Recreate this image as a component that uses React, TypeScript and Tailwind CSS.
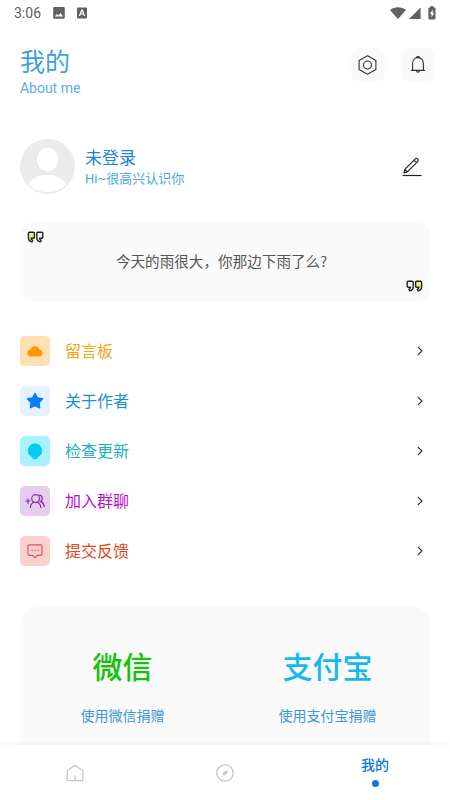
import type { ReactNode } from "react";

type MenuItem = {
  key: string;
  label: string;
  color: string;
  tile: string;
  icon: ReactNode;
};

const menu: MenuItem[] = [
  {
    key: "board",
    label: "留言板",
    color: "text-[#f2a516]",
    tile: "bg-[#ffe0b2]",
    icon: (
      <svg viewBox="0 0 30 30" className="size-[30px]" fill="#ff9800">
        <path d="M9.9 20.6a3.7 3.7 0 0 1-.7-6.7q.6-.3 1.4-.3a4.6 4.6 0 0 1 8.8 0q.8 0 1.4.3a3.7 3.7 0 0 1-.7 6.7z" />
      </svg>
    ),
  },
  {
    key: "author",
    label: "关于作者",
    color: "text-[#1a8fcf]",
    tile: "bg-[#e5f2ff]",
    icon: (
      <svg viewBox="0 0 30 30" className="size-[30px]" fill="#0a7cff" stroke="#0a7cff" strokeWidth="1.8" strokeLinejoin="round">
        <path d="m15 7.8 2.3 4.3 4.9.9-3.4 3.6.6 4.9-4.4-2-4.4 2 .6-4.9-3.4-3.6 4.9-.9z" />
      </svg>
    ),
  },
  {
    key: "update",
    label: "检查更新",
    color: "text-[#22aebf]",
    tile: "bg-[#aaf0ff]",
    icon: (
      <svg viewBox="0 0 30 30" className="size-[30px]" fill="#00cdf5">
        <path d="M15 7.6a7 7 0 0 1 4.4 12.5c-.9.7-1.4 1-1.6 1.6h-5.6c-.2-.6-.7-.9-1.6-1.6A7 7 0 0 1 15 7.6z" />
        <path d="M12.6 22h4.8v.8h-1.2v.4h-2.4v-.4h-1.2z" />
      </svg>
    ),
  },
  {
    key: "group",
    label: "加入群聊",
    color: "text-[#b414d2]",
    tile: "bg-[#e6cdee]",
    icon: (
      <svg viewBox="0 0 30 30" className="size-[30px]" fill="none" stroke="#8a2aa5" strokeWidth="1.2" strokeLinecap="round">
        <path d="M5.8 15h4.4M8 12.8v4.4" />
        <circle cx="15.6" cy="12.6" r="3.9" />
        <path d="M10.4 21.4c.3-2.6 1.5-4.4 3.4-5.1M17.4 16.3c1.9.7 3.1 2.5 3.4 5.1" />
        <path d="M18.9 9.2c3.5-.3 4.4 4.4 1.7 6.2 2 .8 3.3 2.5 3.7 5.2" />
      </svg>
    ),
  },
  {
    key: "feedback",
    label: "提交反馈",
    color: "text-[#dc4a1c]",
    tile: "bg-[#fbd0cf]",
    icon: (
      <svg viewBox="0 0 30 30" className="size-[30px]" fill="none" stroke="#d95555" strokeWidth="1.2" strokeLinecap="round" strokeLinejoin="round">
        <path d="M9.4 8.9h11.2q1.4 0 1.4 1.4v7.6q0 1.4-1.4 1.4h-3.2L15 21.7l-2.4-2.4H9.4Q8 19.3 8 17.9v-7.6q0-1.4 1.4-1.4z" />
        <path d="M11.8 14.3h.5M14.8 14.3h.5M17.8 14.3h.5" />
      </svg>
    ),
  },
];

function StatusBar() {
  return (
    <div className="flex h-6 shrink-0 items-center px-3.5 pt-px text-[#616161]">
      <span className="w-[39px] text-[14px] leading-5">3:06</span>
      <svg viewBox="0 0 12 12" className="size-3" fill="currentColor">
        <path fillRule="evenodd" d="M1.4 0h9.2q1.2 0 1.2 1.2v9.4q0 1.2-1.2 1.2H1.4Q.2 11.8.2 10.6V1.2Q.2 0 1.4 0zM1.8 9.4h8.4L7.6 6 5.4 8.5 3.9 6.9z" />
      </svg>
      <svg viewBox="0 0 10 12" className="ml-3 h-3 w-2.5" fill="currentColor">
        <path fillRule="evenodd" d="M1 .6h8q1 0 1 1v8.8q0 1-1 1H1q-1 0-1-1V1.6q0-1 1-1zM4.3 2.6 1.8 9h1.3l.5-1.4h2.8L6.9 9h1.3L5.7 2.6zm.7 1.6.9 2.3H4.1z" />
      </svg>
      <div className="ml-auto flex items-center gap-[3px]">
        <svg viewBox="0 0 16 12" className="h-3 w-4" fill="currentColor">
          <path d="M0 3C4.6-.6 11.4-.6 16 3L8 12z" />
        </svg>
        <svg viewBox="0 0 12 12" className="h-3 w-3" fill="currentColor">
          <path d="M11.6.4V12H0z" />
        </svg>
        <svg viewBox="0 0 8 14" className="ml-1 h-3.5 w-2" fill="currentColor">
          <path fillRule="evenodd" d="M2.4 0h3v1.4h1.3q.8 0 .8.8v10.4q0 .8-.8.8H1.2q-.8 0-.8-.8V2.2q0-.8.8-.8h1.2zM4.7 3.6 1.9 8h1.6v3.4L6.2 7H4.7z" />
        </svg>
      </div>
    </div>
  );
}

// closing mark; the opening one is its mirror image
function QuoteMark() {
  return (
    <svg viewBox="0 0 17 12" className="h-3 w-[17px]" fill="none" stroke="#222" strokeWidth="1.4" strokeLinejoin="round">
      <path d="M2.2 1.2h4q1 0 1 1v4.3q0 3.7-3.5 4.3l-.8-1.5q1.5-.6 1.7-2.1H2.2q-1 0-1-1v-4q0-1 1-1z" />
      <path fill="#f1ee85" d="M10.6 1.2h4q1 0 1 1v4.3q0 3.7-3.5 4.3l-.8-1.5q1.5-.6 1.7-2.1h-2.4q-1 0-1-1v-4q0-1 1-1z" />
    </svg>
  );
}

function Header() {
  return (
    <header className="flex items-start justify-between pl-5 pr-[15px]">
      <div className="mt-[21px]">
        <h1 className="text-[25px] leading-9 text-[#3d9fe0]">我的</h1>
        <p className="-mt-px text-[14px] leading-4 tracking-[-0.02px] text-[#5aaee2]">About me</p>
      </div>
      <div className="mt-6 flex gap-4">
        <button className="flex size-[34px] items-center justify-center rounded-[9px] bg-[#fafafa]">
          <svg viewBox="0 0 20 20" className="size-5" fill="none" stroke="#333" strokeWidth="1.1" strokeLinejoin="round">
            <path d="M9.5.8 17.9 5.4v9.2L9.5 19.2l-8.4-4.6V5.4z" />
            <circle cx="9.5" cy="10" r="4" />
          </svg>
        </button>
        <button className="flex size-[34px] items-center justify-center rounded-[9px] bg-[#fafafa]">
          <svg viewBox="0 0 20 20" className="size-5" fill="none" stroke="#333" strokeWidth="1.1" strokeLinecap="round" strokeLinejoin="round">
            <path d="M3.4 15.4h13.2M4.6 15.2V8.7c0-3.4 2.1-6.1 5.4-6.1s5.4 2.7 5.4 6.1v6.5M8.4 2.4c.6-1.2 2.6-1.2 3.2 0M8.4 15.6c.2 2.2 3 2.2 3.2 0" />
          </svg>
        </button>
      </div>
    </header>
  );
}

function Profile() {
  return (
    <section className="mt-[43px] flex h-[55px] items-center pl-5 pr-7">
      <svg viewBox="0 0 55 55" className="size-[55px]">
        <circle cx="27.5" cy="27.5" r="27.5" fill="#ebebeb" />
        <ellipse cx="27.5" cy="20.5" rx="10.5" ry="12" fill="#fff" />
        <path d="M8.5 45.5C12.5 39 19 35.8 27.5 35.8S42.5 39 46.5 45.5C41.5 50.5 35 53 27.5 53S13.5 50.5 8.5 45.5z" fill="#fff" />
      </svg>
      <div className="ml-2.5">
        <p className="text-[17px] leading-6 text-[#2585d2]">未登录</p>
        <p className="-mt-px text-[13px] leading-[19px] text-[#4fa6df]">Hi~很高兴认识你</p>
      </div>
      <svg viewBox="0 0 20 20" className="ml-auto size-5" fill="none" stroke="#222" strokeWidth="1.2" strokeLinejoin="round">
        <path d="M2 15.8 2.8 12.3 13.3 1.8q1.2-1 2.4.1t.1 2.5L5.3 14.9zM12 3.2l2.5 2.5M2.8 12.3l2.5 2.6" />
        <path d="M.8 18.5h18.8" />
      </svg>
    </section>
  );
}

function BottomNav() {
  return (
    <nav className="relative z-10 grid h-[55px] shrink-0 grid-cols-3 bg-white shadow-[0_-2px_5px_rgba(0,0,0,0.045)]">
      <button className="flex items-center justify-center">
        <svg viewBox="0 0 18 18" className="size-[18px]" fill="none" stroke="#c4c8ce" strokeWidth="1.3" strokeLinecap="round" strokeLinejoin="round">
          <path d="M9 1.2 1.7 6.2q-.5.3-.5 1v8.5q0 1 1 1h13.6q1 0 1-1V7.2q0-.7-.5-1zM9 12v4.5" />
        </svg>
      </button>
      <button className="flex items-center justify-center">
        <svg viewBox="0 0 18 18" className="size-[18px]" fill="none" stroke="#c4c8ce" strokeWidth="1.3">
          <circle cx="9" cy="9" r="8.2" />
          <path d="M11.8 6.2q.4 2.3-1.2 3.9T6.7 11.4q-.2-1.9 1.2-3.3t3.9-1.9z" fill="#c4c8ce" stroke="none" />
        </svg>
      </button>
      <button className="flex flex-col items-center pt-2.5">
        <span className="text-[14px] font-medium leading-5 text-[#0f76e6]">我的</span>
        <span className="mt-[5px] size-[7px] rounded-full bg-[#0f76e6]" />
      </button>
    </nav>
  );
}

export default function App() {
  return (
    <div className="flex h-[800px] w-[450px] flex-col overflow-hidden bg-white font-[Roboto,'Noto_Sans_CJK_SC',sans-serif]">
      <StatusBar />
      <main className="min-h-0 flex-1 overflow-hidden">
        <Header />
        <Profile />

        {/* Daily quote */}
        <section className="mx-5 mt-7 flex h-[79px] flex-col justify-between rounded-xl bg-[#fafafa] px-[7px] py-[9px]">
          <div className="-scale-x-100 self-start">
            <QuoteMark />
          </div>
          <p className="pb-px pr-[7px] text-center font-['Noto_Sans_CJK_SC',sans-serif] text-[14.6px] leading-5 text-[#555]">
            今天的雨很大，你那边下雨了么?
          </p>
          <div className="self-end">
            <QuoteMark />
          </div>
        </section>

        <ul className="mt-[25px]">
          {menu.map((item) => (
            <li key={item.key} className="flex h-[50px] items-center pl-5 pr-[27px]">
              <span className={`size-[30px] rounded-[5px] ${item.tile}`}>{item.icon}</span>
              <span className={`ml-[15px] pt-0.5 text-[16px] leading-6 ${item.color}`}>{item.label}</span>
              <svg viewBox="0 0 6 10" className="ml-auto h-2.5 w-1.5" fill="none" stroke="#333" strokeWidth="1.2">
                <path d="M.8.8 5 5 .8 9.2" />
              </svg>
            </li>
          ))}
        </ul>

        {/* Donations */}
        <section className="mx-5 mt-[30px] grid h-44 grid-cols-2 rounded-[20px] bg-[#fafafa] pt-[42px] text-center">
          <div>
            <p className="text-[30px] font-medium leading-10 text-[#14c20c]">微信</p>
            <p className="mt-[18px] text-[14px] leading-5 text-[#3f96d4]">使用微信捐赠</p>
          </div>
          <div>
            <p className="text-[30px] font-medium leading-10 text-[#14b9f0]">支付宝</p>
            <p className="mt-[18px] text-[14px] leading-5 text-[#3f96d4]">使用支付宝捐赠</p>
          </div>
        </section>
      </main>
      <BottomNav />
    </div>
  );
}
